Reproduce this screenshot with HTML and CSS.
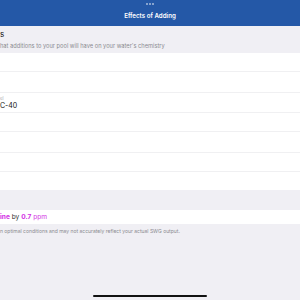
FILE: index.html
```html
<!DOCTYPE html>
<html lang="en">
<head>
    <meta charset="UTF-8">
    <meta name="viewport" content="width=device-width, initial-scale=1.0">
    <title>Effects of Adding</title>
    <link rel="stylesheet" href="styles.css">
</head>
<body>

    <div class="barra-topo">
        <div class="pontos"><span></span><span></span><span></span></div>
        <div class="titulo-topo">Effects of Adding</div>
    </div>

    <div class="intro">
        <div class="intro-titulo">s</div>
        <div class="intro-texto">hat additions to your pool will have on your water's chemistry</div>
    </div>

    <div class="lista">
        <div class="linha"></div>
        <div class="linha alta"></div>
        <div class="linha alta">
            <div class="rotulo">el</div>
            <div class="valor">C-40</div>
        </div>
        <div class="linha"></div>
        <div class="linha alta"></div>
        <div class="linha"></div>
        <div class="linha"></div>
    </div>

    <div class="resultado">
        <span class="destaque">ine</span> by <span class="destaque">0.7</span> <span class="unidade">ppm</span>
    </div>

    <div class="nota">n optimal conditions and may not accurately reflect your actual SWG output.</div>

    <div class="indicador"></div>

</body>
</html>
```

FILE: styles.css
```css
body {
    margin: 0;
    width: 300px;
    height: 300px;
    display: flex;
    flex-direction: column;
    background-color: #f0eff4;
    font-family: "Inter", "Liberation Sans", sans-serif;
    overflow: hidden;
}
.barra-topo {
    height: 26px;
    background-color: #2458a7;
    display: flex;
    flex-direction: column;
    align-items: center;
}
.pontos {
    display: flex;
    gap: 1px;
    margin-top: 3px;
}
.pontos span {
    width: 2px;
    height: 2px;
    border-radius: 50%;
    background-color: rgba(255, 255, 255, 0.6);
}
.titulo-topo {
    margin-top: 7px;
    color: #fff;
    font-size: 6.2px;
    font-weight: 600;
}
.intro {
    height: 27px;
    padding-top: 3px;
    box-sizing: border-box;
}
.intro-titulo {
    font-size: 8px;
    line-height: 10px;
    color: #111;
}
.intro-texto {
    margin-top: 3px;
    font-size: 5.7px;
    color: #8b8b90;
}
.lista {
    background-color: #fff;
}
.linha {
    height: 18px;
    border-bottom: 1px solid #f0f0f2;
    display: flex;
    flex-direction: column;
    justify-content: center;
}
.linha.alta {
    height: 19.5px;
}
.linha:last-child {
    border-bottom: none;
}
.rotulo {
    font-size: 4.5px;
    color: #b0b0b4;
    margin-top: 2px;
}
.valor {
    font-size: 7px;
    color: #111;
}
.resultado {
    margin-top: 20px;
    height: 14px;
    line-height: 14px;
    background-color: #fff;
    font-size: 6.6px;
    color: #333;
}
.destaque {
    color: #d22ee4;
    font-weight: 700;
}
.unidade {
    color: #d22ee4;
}
.nota {
    margin-top: 4px;
    font-size: 5px;
    color: #8b8b90;
}
.indicador {
    margin: auto auto 3px;
    width: 114px;
    height: 2px;
    border-radius: 1px;
    background-color: #111;
}
```
